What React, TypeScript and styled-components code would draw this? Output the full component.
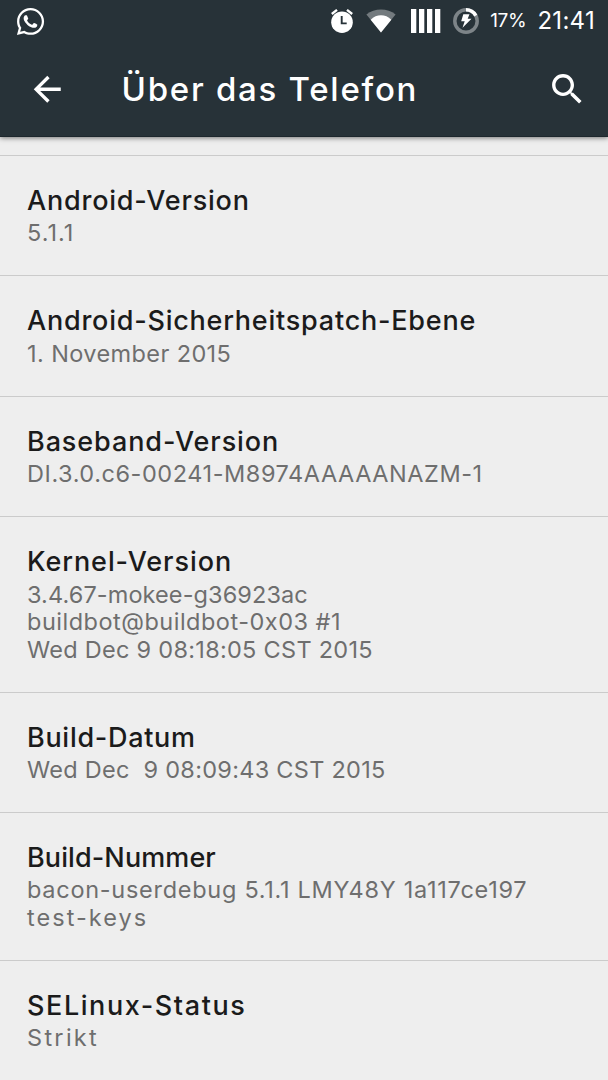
import React from "react";
import styled, { createGlobalStyle } from "styled-components";
import { FaWhatsapp } from "react-icons/fa";

const Global = createGlobalStyle`
  * { box-sizing: border-box; }
  html, body { margin: 0; padding: 0; }
  body { background: #eeeeee; overflow: hidden; font-family: Inter, "Noto Sans", sans-serif; }
`;
const Screen = styled.div`
  width: 608px;
  height: 1080px;
  overflow: hidden;
  background: #eeeeee;
  display: flex;
  flex-direction: column;
`;
const Header = styled.header`
  flex: none;
  height: 137px;
  background: #273238;
  color: #fff;
  border-bottom: 1px solid #1d272d;
  box-shadow: 0 1px 5px rgba(0, 0, 0, 0.5);
`;
const StatusBar = styled.div`
  height: 42px;
  display: flex;
  align-items: center;
  justify-content: space-between;
  padding: 0 13px 0 15px;
`;
const StatusIcons = styled.div`
  display: flex;
  align-items: center;
`;
const Slot = styled.span<{ $gap: number }>`
  display: flex;
  margin-right: ${(p) => p.$gap}px;
`;
const Label = styled.span<{ $size: number; $track: number; $gap?: number }>`
  font-size: ${(p) => p.$size}px;
  line-height: 42px;
  letter-spacing: ${(p) => p.$track}px;
  margin-right: ${(p) => p.$gap ?? 0}px;
  white-space: nowrap;
`;
const Toolbar = styled.div`
  height: 94px;
  display: flex;
  align-items: center;
  padding: 0 21px 0 27px;
`;
const Heading = styled.h1`
  margin: 0 auto 0 54px;
  font-size: 33px;
  font-weight: 500;
  line-height: 40px;
  letter-spacing: 1.73px;
  white-space: nowrap;
`;
const List = styled.main`
  padding-top: 18px;
`;
const Row = styled.section`
  border-top: 1px solid #cbcbcb;
  padding: 27px 27px 28.4px;
`;
const Title = styled.div<{ $track: number }>`
  font-size: 27px;
  font-weight: 500;
  line-height: 35px;
  margin-bottom: 1.4px;
  color: #1b1b1b;
  letter-spacing: ${(p) => p.$track}px;
  white-space: nowrap;
`;
const Line = styled.div<{ $track: number }>`
  font-size: 23.5px;
  line-height: 27.6px;
  color: #6e6e6e;
  letter-spacing: ${(p) => p.$track}px;
  white-space: pre;
`;

// Each text is paired with its letter spacing in pixels.
type Text = [string, number];
const rows: { title: Text; lines: Text[] }[] = [
  { title: ["Android-Version", 0.79], lines: [["5.1.1", 1]] },
  { title: ["Android-Sicherheitspatch-Ebene", 0.77], lines: [["1. November 2015", 0.4]] },
  { title: ["Baseband-Version", 0.9], lines: [["DI.3.0.c6-00241-M8974AAAAANAZM-1", 0.56]] },
  {
    title: ["Kernel-Version", 0.93],
    lines: [
      ["3.4.67-mokee-g36923ac", 0.1],
      ["buildbot@buildbot-0x03 #1", 0.5],
      ["Wed Dec 9 08:18:05 CST 2015", 0.28],
    ],
  },
  { title: ["Build-Datum", 0.7], lines: [["Wed Dec  9 08:09:43 CST 2015", 0.28]] },
  {
    title: ["Build-Nummer", 0.1],
    lines: [["bacon-userdebug 5.1.1 LMY48Y 1a117ce197", 0.72], ["test-keys", 2.05]],
  },
  { title: ["SELinux-Status", 1.58], lines: [["Strikt", 2.3]] },
];

const Alarm = () => (
  <svg width="24" height="26" viewBox="0 0 24 26">
    <circle cx="12" cy="14.2" r="10.8" fill="#fff" />
    <path d="M1.800 6 7 1.900M22.200 6 17 1.900" stroke="#fff" strokeWidth="2.4" />
    <path d="M11.7 8v7.400h5" fill="none" stroke="#273238" strokeWidth="1.9" />
  </svg>
);
const Wifi = () => (
  <svg width="30" height="24" viewBox="0 0 30 24">
    <path d="M15 23.500.400 5.400C8.500-1.300 21.500-1.300 29.600 5.400Z" fill="#737a7e" />
    <path d="M15 23.500 4.700 10.700C10.500 4.800 19.500 4.800 25.300 10.700Z" fill="#fff" />
  </svg>
);
const Signal = () => (
  <svg width="30" height="24" viewBox="0 0 30 24" fill="#fff">
    {[0, 8, 16, 24].map((x) => (
      <rect key={x} x={x} y="0" width="5.3" height="24" />
    ))}
  </svg>
);
const Battery = () => (
  <svg width="26" height="26" viewBox="0 0 26 26">
    <circle cx="13" cy="13" r="11.200" fill="none" stroke="#7d8488" strokeWidth="3.500" />
    <path d="M13 1.800a11.200 11.200 0 0 1 9.800 5.800" fill="none" stroke="#fff" strokeWidth="3.500" />
    <path d="M10.300 6.300h6.200l-1.800 4.400h3.800l-9 9 2.200-6.500H8.200Z" fill="#fff" />
  </svg>
);
const Glyph = ({ d }: { d: string }) => (
  <svg width="40.5" height="40.5" viewBox="0 0 24 24" fill="#fff">
    <path d={d} />
  </svg>
);

export default function App() {
  return (
    <>
      <Global />
      <Screen>
        <Header>
          <StatusBar>
            <FaWhatsapp size={31} />
            <StatusIcons>
              <Slot $gap={12}><Alarm /></Slot>
              <Slot $gap={15}><Wifi /></Slot>
              <Slot $gap={12}><Signal /></Slot>
              <Slot $gap={11}><Battery /></Slot>
              <Label $size={19} $track={-0.3} $gap={11}>17%</Label>
              <Label $size={24} $track={0.3}>21:41</Label>
            </StatusIcons>
          </StatusBar>
          <Toolbar>
            <Glyph d="M20 11H7.830l5.590-5.590L12 4l-8 8 8 8 1.410-1.410L7.830 13H20v-2z" />
            <Heading>Über das Telefon</Heading>
            <Glyph d="M15.500 14h-.79l-.28-.27C15.410 12.590 16 11.110 16 9.500 16 5.910 13.090 3 9.500 3S3 5.910 3 9.500 5.910 16 9.500 16c1.610 0 3.090-.59 4.230-1.570l.27.28v.79l5 4.990L20.490 19l-4.990-5zm-6 0C7.010 14 5 11.990 5 9.500S7.010 5 9.500 5 14 7.010 14 9.500 11.990 14 9.500 14z" />
          </Toolbar>
        </Header>
        <List>
          {rows.map(({ title, lines }) => (
            <Row key={title[0]}>
              <Title $track={title[1]}>{title[0]}</Title>
              {lines.map(([text, track]) => (
                <Line key={text} $track={track}>{text}</Line>
              ))}
            </Row>
          ))}
        </List>
      </Screen>
    </>
  );
}
